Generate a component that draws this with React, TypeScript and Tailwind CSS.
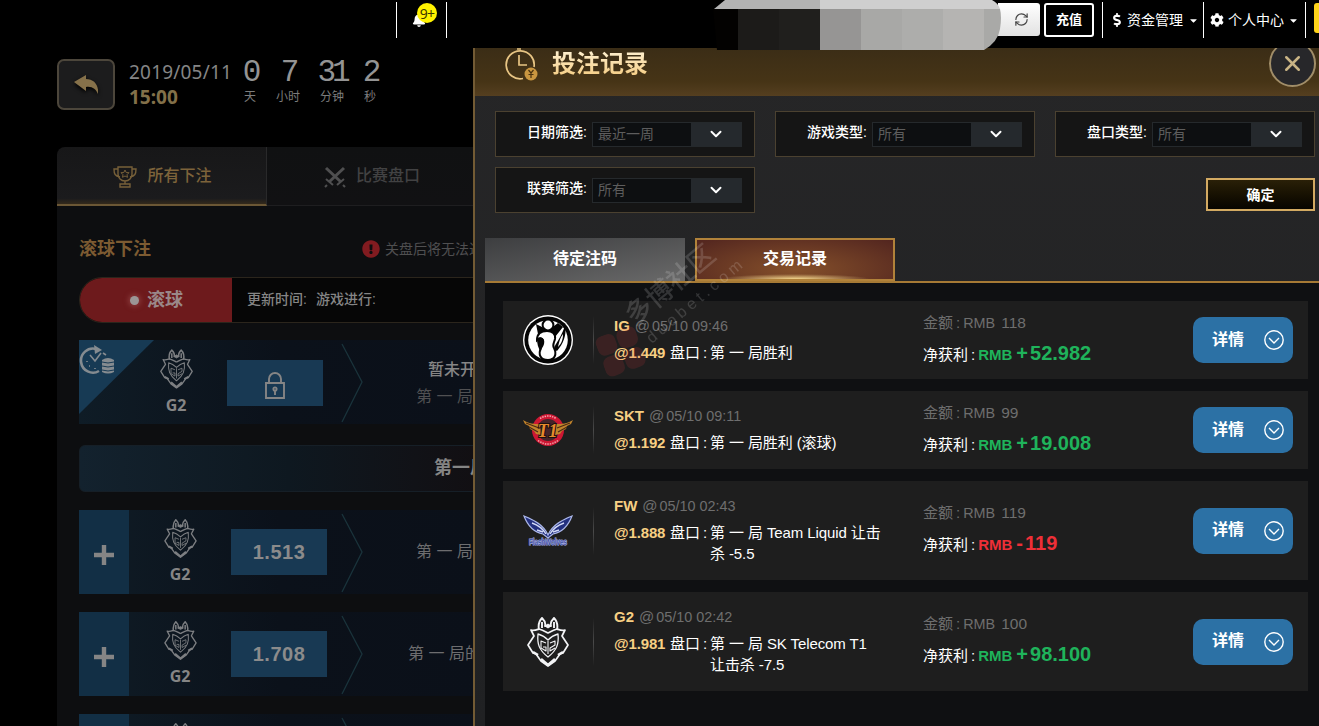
import React from 'react';
import { RefreshCw, X, ChevronDown } from 'lucide-react';
import { FaBell, FaCog, FaDollarSign, FaCaretDown, FaExclamationCircle } from 'react-icons/fa';

interface Bet {
    team: string;
    time: string;
    odds: string;
    lines: string[];
    amount: string;
    profit: string;
    logo: React.ReactNode;
}

const G2Logo: React.FC<{ className: string }> = ({ className }) => (
    <svg viewBox="0 0 42 50" className={className} fill="none" stroke="currentColor" strokeLinejoin="round">
        <path d="M12 13c-1-5 0-9 3-12 2 2 4 5 3 8h6c-1-3 1-6 3-8 3 3 4 7 3 12M15 5v6M27 5v6" strokeWidth="1.9" />
        <path d="M18 9l3-2 3 2-3 2z" fill="currentColor" strokeWidth="1" />
        <path d="M4 13c3 1 5 0 8-1 4 1 7 3 9 4 2-1 5-3 9-4 3 1 5 2 8 1l-3 6 6 9-5 8-3 1-5 7-7 5-7-5-5-7-3-1-5-8 6-9z" strokeWidth="1.7" />
        <path d="M14 42l7 6 7-6M6 35l5 3M36 35l-5 3" strokeWidth="2.6" />
        <path d="M11 17c4 1 7 3 10 6 3-3 6-5 10-6 1 10-1 16-10 23-9-7-11-13-10-23z" strokeWidth="1.3" />
        <path d="M19 26l-5-2v7l5 3v-4h-3M23 26l5-2v4l-5 3v3l5-3M21 24v13" strokeWidth="1.1" />
    </svg>
);

const IGLogo = () => (
    <svg viewBox="0 0 50 50" className="w-[50px] h-[50px]">
        <circle cx="25" cy="25" r="25" fill="#fff" />
        <circle cx="25" cy="25" r="23.6" fill="#050505" />
        <circle cx="25" cy="25" r="19.800" fill="#fff" />
        <path d="M13 9l10 5-1 3-7 2zM27 14l8-6 5 4-8 10-6-5z" fill="#050505" />
        <circle cx="25" cy="10" r="5.400" fill="#fff" stroke="#050505" strokeWidth="2" />
        <path d="M14 25c0-6 4-9 10-9 5 0 9 3 8 8-1 4-3 6-1 9 3 6 1 12-6 12-8 0-10-6-7-12 2-3 3-5 2-8-1-2-4-2-6 0z" fill="#fff" stroke="#050505" strokeWidth="2" />
        <path d="M14 23c5-2 8 1 6 6-1 3-2 5-2 8-3-4-4-8-4-14z" fill="#050505" />
        <path d="M42 11c2 9-2 18-8 25-3-1-3-4-1-7 3-5 6-10 9-18z" fill="#050505" />
        <path d="M40 19c0 6-2 10-5 13 1-5 2-9 5-13z" fill="#fff" />
    </svg>
);

const SKTLogo = () => (
    <svg viewBox="0 0 50 34" className="w-[50px] h-[34px]">
        <circle cx="25" cy="17" r="16" fill="#cd1733" />
        <circle cx="25" cy="17" r="11" fill="#45242a" />
        <path d="M0 7c6 4 11 4 17 4l1 11-5-1-2-3-4-2-1-3-4-2zM50 7c-6 4-11 4-17 4l-1 11 5-1 2-3 4-2 1-3 4-2z" fill="#c2842b" />
        <path d="M3 10l13 5M6 14l9 5M47 10l-13 5M44 14l-9 5" stroke="#4b2a14" strokeWidth="1.2" />
        <text x="24.500" y="23.500" textAnchor="middle" textLength="20" lengthAdjust="spacingAndGlyphs" fontSize="18" fontWeight="700" fontStyle="italic" fill="#e58a2c" stroke="#1c1010" strokeWidth="2" paintOrder="stroke" fontFamily="Liberation Serif, serif">T1</text>
        <path d="M17 5.500q8-5 16 0M15 27.500q10 7 20 0" stroke="#f3a6ae" strokeWidth="1.500" strokeDasharray="1.500 1" fill="none" />
    </svg>
);

const FWLogo = () => (
    <svg viewBox="0 0 50 32" className="w-[50px] h-[32px]">
        <path d="M1 1c10 4 20 9 24 19C29 10 39 5 49 1c-3 8-9 16-19 18l-5 4-5-4C10 17 4 9 1 1z" fill="#23307f" stroke="#aab6e8" strokeWidth="1.2" />
        <path d="M9 8c6 2 11 6 14 11M41 8c-6 2-11 6-14 11M14 15l6 2M36 15l-6 2" stroke="#d3daf7" strokeWidth="1.4" fill="none" />
        <text x="25" y="30" textAnchor="middle" textLength="38" lengthAdjust="spacingAndGlyphs" fontSize="9" fontWeight="700" fill="#4754a6" stroke="#a9b3e4" strokeWidth="1.2" paintOrder="stroke" fontFamily="Liberation Sans, sans-serif">FlashWolves</text>
    </svg>
);

const bets: Bet[] = [
    { team: 'IG', time: '05/10 09:46', odds: '1.449', lines: ['第 一 局胜利'], amount: '118', profit: '+52.982', logo: <IGLogo /> },
    { team: 'SKT', time: '05/10 09:11', odds: '1.192', lines: ['第 一 局胜利 (滚球)'], amount: '99', profit: '+19.008', logo: <SKTLogo /> },
    { team: 'FW', time: '05/10 02:43', odds: '1.888', lines: ['第 一 局 Team Liquid 让击', '杀 -5.5'], amount: '119', profit: '-119', logo: <FWLogo /> },
    { team: 'G2', time: '05/10 02:42', odds: '1.981', lines: ['第 一 局 SK Telecom T1', '让击杀 -7.5'], amount: '100', profit: '+98.100', logo: <G2Logo className="w-[42px] h-[50px] text-gray-100" /> }
];

const countdown = [
    { value: '0', unit: '天', width: 'w-[30px]' },
    { value: '7', unit: '小时', width: 'w-[46px]' },
    { value: '31', unit: '分钟', width: 'w-[42px]' },
    { value: '2', unit: '秒', width: 'w-[34px]' }
];

const Header = () => (
    <header className="relative z-20 flex shrink-0 h-[48px] bg-black text-white text-[14px]">
        <div className="relative flex shrink-0 items-center ml-[396px] mt-[2px] w-[51px] h-9 border-x border-white pl-4">
            <FaBell className="size-[14px] -ml-px" />
            <span className="absolute left-[20px] top-[1px] flex items-center justify-center size-5 rounded-full bg-[#fff200] text-[14px] tracking-tighter text-[#3c3800] font-['Noto_Sans',sans-serif]">9+</span>
        </div>
        <div className="flex shrink-0 items-center justify-center ml-[551px] mt-[3px] w-[42px] h-[33px] rounded-r-[3px] bg-linear-to-b from-white to-[#e2e2e2] text-[#444]">
            <RefreshCw className="size-[15px] ml-1" strokeWidth={1.9} />
        </div>
        <div className="flex shrink-0 items-center justify-center ml-1 mt-[3px] w-[50px] h-[34px] border-2 border-white rounded-[3px] text-[13px] font-bold">充值</div>
        <div className="flex shrink-0 items-center ml-2 mt-[2px] h-9 w-[101px] border-l border-white pl-[7px]">
            <FaDollarSign className="size-[14px]" />
            <span className="ml-[3px]">资金管理</span>
            <FaCaretDown className="size-[11px] ml-[5px]" />
        </div>
        <div className="flex shrink-0 items-center mt-[2px] h-9 w-[103px] border-x border-white pl-[6px]">
            <FaCog className="size-[14px]" />
            <span className="ml-1">个人中心</span>
            <FaCaretDown className="size-[11px] ml-1" />
        </div>
        <div className="shrink-0 ml-2 mt-[3px] w-[5px] h-[30px] rounded-l-[3px] bg-[#ffd31a]"></div>

        {/* masked balance */}
        <svg className="absolute left-[712px] top-0 w-[290px] h-[50px]" viewBox="0 0 290 50">
            <path d="M2 9L13 0h95v9z" fill="#b3b3b3" />
            <path d="M108 0h172q6 3 8 9H108z" fill="#cfcfcf" />
            <path d="M1 9h25v41H5z" fill="#030201" />
            <rect x="26" y="9" width="41" height="41" fill="#1c1b19" />
            <rect x="67" y="9" width="41" height="41" fill="#201f1d" />
            <rect x="108" y="9" width="41" height="41" fill="#969594" />
            <rect x="149" y="9" width="41" height="41" fill="#a8a8a6" />
            <rect x="190" y="9" width="41" height="41" fill="#adadab" />
            <rect x="231" y="9" width="41" height="41" fill="#b5b4b2" />
            <path d="M272 9h16q2 8 0 20-2 13-16 21z" fill="#a9a9a7" />
        </svg>
    </header>
);

const Chevron = () => (
    <svg viewBox="0 0 22 84" className="w-[22px] h-full shrink-0" fill="none">
        <path d="M1 4l20 38L1 82" stroke="#1a333b" strokeWidth="1.3" />
    </svg>
);

const OddsRow: React.FC<{ odds: string; label: string; indent: string }> = ({ odds, label, indent }) => (
    <div className="flex h-[84px] mb-[18px] w-[400px] bg-linear-to-r from-[#0f1c26] via-[#0b111a] to-[#0b1019]">
        <div className="flex items-center justify-center w-[50px] shrink-0 bg-[#122f45] pt-[6px]">
            <svg viewBox="0 0 20 20" className="size-5"><path d="M10 0v20M0 10h20" stroke="#858585" strokeWidth="4.4" /></svg>
        </div>
        <div className="flex flex-col items-center w-[102px] shrink-0 pt-[9px]">
            <G2Logo className="w-[33px] h-[39px] text-[#7d7f82]" />
            <span className="mt-[4px] text-[16px] font-bold leading-6 text-[#858585] font-['Noto_Sans',sans-serif]">G2</span>
        </div>
        <div className="flex items-center justify-center w-24 h-[46px] mt-[19px] shrink-0 bg-[#183953] text-[20px] font-bold text-[#8b8b8b] tracking-[0.5px]">{odds}</div>
        <div className="ml-[14px] shrink-0"><Chevron /></div>
        <span className={`${indent} leading-[84px] text-[16px] text-[#6d6d6f] whitespace-nowrap`}>{label}</span>
    </div>
);

const MatchPanel = () => (
    <div className="w-[473px] shrink-0 h-full overflow-hidden pl-[57px] bg-black">
        <div className="flex h-[99px] pt-[11px]">
            <div className="flex items-center justify-center w-[58px] h-[51px] border-2 border-[#4c463b] rounded-[7px] bg-[#1c1c1d]">
                <svg viewBox="0 0 24 20" className="w-6 h-5 drop-shadow-[0_2px_2px_#000]">
                    <path d="M0 7L12 0v4c8 0 13 6 12 15-2-5-6-8-12-7v4z" fill="#86714a" />
                </svg>
            </div>
            <div className="ml-[14px] w-[106px] pt-px font-['Noto_Sans',sans-serif] text-[19px] leading-[25px]">
                <p className="text-[#858585] tracking-[0.2px]">2019/05/11</p>
                <p className="text-[#827049] font-bold">15:00</p>
            </div>
            <div className="flex pt-[2px]">
                {countdown.map(c => (
                    <div key={c.unit} className={`${c.width} flex flex-col items-center`}>
                        <span className="h-[26px] leading-[23px] text-[31px] tracking-[-4px] pr-[-4px] text-[#949494] font-['Liberation_Mono',monospace]">{c.value}</span>
                        <span className="text-[12px] leading-[20px] text-[#7c7c7c]">{c.unit}</span>
                    </div>
                ))}
            </div>
        </div>

        <div className="flex h-[59px]">
            <div className="flex items-center justify-center w-[210px] shrink-0 rounded-tl-lg border-r border-r-[#29292a] border-b-2 border-b-[#6b5735] bg-linear-to-b from-[#171718] via-[#1b1b1d] via-90% to-[#33291b]">
                <svg viewBox="0 0 24 22" className="w-6 h-[22px] ml-[2px] mt-[2px]" fill="none" stroke="#776039" strokeWidth="1.4">
                    <path d="M5 1h14v7c0 4-3 7-7 7s-7-3-7-7zM5 3H1c0 5 1 7 6 8M19 3h4c0 5-1 7-6 8M12 15v3M8 18h8M7 21h10v-3H7z" />
                    <path d="M12 4l1.2 2.5 2.8.2-2 2 .5 2.6L12 10l-2.500 1.300.5-2.600-2-2 2.800-.2z" strokeWidth="1" />
                </svg>
                <span className="ml-[10px] text-[16px] font-medium text-[#7d633a]">所有下注</span>
            </div>
            <div className="flex items-center justify-center w-[210px] shrink-0 border-b border-b-[#1e1e20] bg-linear-to-b from-[#101112] to-[#111113] text-[#424243]">
                <svg viewBox="0 0 22 22" className="size-[22px] mt-[2px]" fill="none" stroke="#4f4f50">
                    <path d="M2 2l15 14M20 2L5 16" strokeWidth="3" />
                    <path d="M2 13l7 6M20 13l-7 6M3 19l-2 2M19 19l2 2" strokeWidth="2" />
                </svg>
                <span className="ml-[10px] text-[16px] font-medium">比赛盘口</span>
            </div>
        </div>

        <div className="h-[520px] bg-[#0d0e10] pl-[22px] pt-[27px] overflow-hidden">
            <div className="flex items-center h-[32px] w-[600px]">
                <h2 className="w-[283px] shrink-0 text-[18px] font-bold text-[#7d5b32]">滚球下注</h2>
                <FaExclamationCircle className="size-[18px] text-[#811b20] shrink-0" />
                <span className="ml-[5px] text-[14px] text-[#4f4f50] whitespace-nowrap">关盘后将无法进行下注</span>
            </div>

            <div className="flex mt-3 h-[46px] w-[420px] rounded-l-full overflow-hidden border border-[#2b251c] bg-[#060606]">
                <div className="flex items-center w-[152px] bg-[#6d1a1c] pl-[50px]">
                    <span className="size-[9px] rounded-full bg-[#9b9696] shadow-[0_0_5px_2px_#88383a]"></span>
                    <span className="ml-2 text-[18px] font-bold text-[#9a8889]">滚球</span>
                </div>
                <span className="ml-[15px] leading-[43px] text-[14px] font-medium text-[#858585]">更新时间:</span>
                <span className="ml-[9px] leading-[43px] text-[14px] font-medium text-[#858585]">游戏进行:</span>
            </div>

            <div className="flex mt-[17px] h-[84px] w-[400px] bg-linear-to-r from-[#0f1c26] via-[#0b111a] to-[#0b1019]">
                <svg viewBox="0 0 75 75" className="size-[75px] shrink-0">
                    <path d="M0 0h75L0 74z" fill="#173a54" />
                    <path d="M20 31a12 12 0 1 1-3-22" fill="none" stroke="#858b90" strokeWidth="2.6" />
                    <path d="M15 5l8 5-7 4z" fill="#858b90" />
                    <path d="M11 15l5 6 6-8M8 21v1M10 26h1M16 28v1M24 13l3 2" fill="none" stroke="#858b90" strokeWidth="1.6" />
                    <path d="M23 20q6-4 12 0v12q-6 3-12 0z" fill="#858b90" />
                    <path d="M23 22q6 2 12 0M23 26q6 2 12 0M23 30q6 2 12 0" fill="none" stroke="#173a54" strokeWidth="1" />
                </svg>
                <div className="flex flex-col items-center w-[44px] shrink-0 pt-[9px]">
                    <G2Logo className="w-[33px] h-[40px] text-[#7d7f82]" />
                    <span className="mt-[4px] text-[16px] font-bold leading-6 text-[#858585] font-['Noto_Sans',sans-serif]">G2</span>
                </div>
                <div className="flex items-center justify-center ml-[29px] mt-[20px] w-24 h-[46px] shrink-0 bg-[#183953]">
                    <svg viewBox="0 0 20 27" className="w-5 h-[27px] mt-1" fill="none" stroke="#858585" strokeWidth="1.9">
                        <path d="M1 11h18v15H1zM4 11V7a6 6 0 0 1 12 0v4" />
                        <circle cx="10" cy="17" r="1.6" />
                        <path d="M10 18v5" />
                    </svg>
                </div>
                <div className="ml-[18px] shrink-0"><Chevron /></div>
                <div className="ml-[53px] pt-[16px] whitespace-nowrap leading-[27px]">
                    <p className="pl-[12px] text-[16px] font-medium text-[#858585]">暂未开盘</p>
                    <p className="text-[16px] text-[#505052]">第 一 局胜利</p>
                </div>
            </div>

            <div className="mt-[21px] mb-[18px] h-[47px] w-[420px] rounded-md border border-[#161f27] bg-linear-to-r from-[#13222e] via-[#0e1820] via-50% to-[#120e11] pl-[354px] text-[18px] leading-[44px] font-bold text-[#858585] whitespace-nowrap">第一局</div>
            <OddsRow odds="1.513" label="第 一 局胜利" indent="ml-[53px]" />
            <OddsRow odds="1.708" label="第 一 局的首杀" indent="ml-[45px]" />
            <OddsRow odds="1.650" label="第 一 局首塔" indent="ml-[53px]" />
        </div>
    </div>
);

const FilterBox: React.FC<{ label: string; value: string }> = ({ label, value }) => (
    <div className="flex items-center w-[260px] h-[46px] border border-[#4b4130] bg-[#151515]">
        <span className="w-[91px] text-right text-[14px] font-medium text-white pb-[3px]">{label}:</span>
        <div className="flex ml-[5px] w-[150px] h-[25px] border border-[#25292c]">
            <span className="w-[98px] pl-[5px] text-[14px] leading-[23px] bg-[#0d0f11] text-[#5d5d5d]">{value}</span>
            <span className="flex items-center justify-center flex-1 bg-[#25292d] text-white pr-px">
                <ChevronDown className="size-[18px]" strokeWidth={2.6} />
            </span>
        </div>
    </div>
);

const BetCard: React.FC<{ bet: Bet }> = ({ bet }) => {
    const won = bet.profit.startsWith('+');
    return (
        <div className={`flex items-center w-[805px] mb-3 bg-[#1e1e1e] text-[15px] ${bet.lines.length > 1 ? 'h-[99px]' : 'h-[78px]'}`}>
            <div className="flex items-center justify-center w-[90px]">{bet.logo}</div>
            <div className="w-px h-12 bg-linear-to-b from-transparent via-[#4a4a4a] to-transparent"></div>
            <div className="self-start w-[329px] pl-5 pt-[13px]">
                <p className="leading-6 text-[#6e6e6e]">
                    <span className="font-bold text-[#f7cf83]">{bet.team}</span>
                    <span className="ml-[5px]">@</span>
                    <span className="ml-[2px] text-[14.4px]">{bet.time}</span>
                </p>
                <div className="flex mt-[4px] leading-[21px] text-white whitespace-nowrap">
                    <span className="w-[56px] font-bold text-[#f7cf83] tracking-[-0.15px]">@{bet.odds}</span>
                    <span className="w-[40px]">盘口<span className="ml-[3px]">:</span></span>
                    <div className="tracking-[-0.1px]">
                        {bet.lines.map(line => <p key={line}>{line}</p>)}
                    </div>
                </div>
            </div>
            <div className="w-[270px] pb-[4px] whitespace-nowrap">
                <p className="leading-[28px] h-[29px] text-[#6e6e6e]">
                    金额<span className="mx-[3px]">:</span><span className="text-[14.4px]">RMB</span>
                    <span className="ml-[6px] text-[15.5px]">{bet.amount}</span>
                </p>
                <p className="leading-[30px] h-[30px] text-white">
                    净获利<span className="mx-[3px]">:</span>
                    <span className={`font-bold ${won ? 'text-[#1fb35b]' : 'text-[#ee2f37]'}`}>
                        RMB<span className="ml-1 text-[20px]">{bet.profit[0]}</span><span className="ml-[2px] text-[20px]">{bet.profit.slice(1)}</span>
                    </span>
                </p>
            </div>
            <button className="flex items-center w-[100px] h-[46px] rounded-[10px] bg-[#2c71a5] pl-5 text-[16px] font-bold text-white">
                <span className="-mt-px -ml-px">详情</span>
                <svg viewBox="0 0 20 20" className="size-5 ml-5" fill="none" stroke="#fff" strokeWidth="1.4">
                    <circle cx="10" cy="10" r="9.2" />
                    <path d="M5 8l5 5 5-5" />
                </svg>
            </button>
        </div>
    );
};

const RecordPanel = () => (
    <div className="relative flex flex-col w-[846px] shrink-0 h-full border-l-2 border-[#735b34] bg-linear-to-b from-[#262627] to-[#202123]">
        <div className="relative flex items-center h-[48px] shrink-0 bg-linear-to-b from-[#3b2d16] via-[#463416] via-70% to-[#553f20]">
            <svg viewBox="0 0 34 34" className="w-[34px] h-[34px] ml-[29px] mb-[16px]" fill="none" stroke="#e8c584" strokeWidth="1.7">
                <path d="M19 31.500A14 14 0 1 1 30 20M15 8v10h8M13 2h4" />
                <circle cx="27" cy="27" r="6.500" fill="#c99640" stroke="none" />
                <path d="M24.500 23l2.500 3 2.500-3M27 26v5M24.500 27.500h5" stroke="#48310f" strokeWidth="1.2" />
            </svg>
            <h1 className="ml-[14px] mb-[16px] text-[24px] leading-8 font-bold text-transparent bg-clip-text bg-linear-to-b from-[#fff3d6] to-[#f3c878]">投注记录</h1>
            <button className="absolute left-[794px] -top-[8px] flex items-center justify-center size-[47px] rounded-full border-2 border-[#a08d68] bg-[#27272a]">
                <X className="size-[25px] text-[#c9b485]" strokeWidth={2.4} />
            </button>
        </div>

        <div className="relative h-[142px] shrink-0 pl-5 pt-[15px]">
            <div className="grid grid-cols-[260px_260px_260px] gap-x-5 gap-y-[10px]">
                <FilterBox label="日期筛选" value="最近一周" />
                <FilterBox label="游戏类型" value="所有" />
                <FilterBox label="盘口类型" value="所有" />
                <FilterBox label="联赛筛选" value="所有" />
                <button className="col-start-3 justify-self-end mt-[11px] w-[109px] h-[33px] border-2 border-[#d3aa62] bg-linear-to-b from-[#2a2008] to-[#070500] text-[14px] leading-[28px] font-bold text-white">确定</button>
            </div>
        </div>

        <div className="flex ml-[10px] h-[45px] shrink-0 border-b-2 border-[#a67a35]">
            <div className="w-[200px] h-full bg-linear-to-br from-[#3d3e40] to-[#6a6a6a] text-center text-[16px] leading-[41px] font-bold text-white">待定注码</div>
            <div className="ml-[10px] w-[200px] h-[43px] border-2 border-[#b1823a] bg-[radial-gradient(ellipse_75px_5px_at_50%_100%,#f4d68d,transparent),radial-gradient(ellipse_at_50%_75%,#85502a,#52251f)] text-center text-[16px] leading-[38px] font-bold text-white">交易记录</div>
        </div>
        <div className="ml-[10px] flex-1 bg-[#0f1012] pl-[18px] pt-[18px]">
            {bets.map(bet => <BetCard key={bet.team} bet={bet} />)}
        </div>

        {/* watermark */}
        <div className="absolute left-[110px] top-[214px] w-[180px] h-[70px] -rotate-[40deg] flex items-center opacity-15 pointer-events-none">
            <svg viewBox="0 0 44 44" className="size-[44px] shrink-0 -ml-2 mt-4 rotate-[20deg]" fill="#d8383e">
                <rect x="0" y="0" width="20" height="20" rx="7" />
                <rect x="22" y="0" width="20" height="20" rx="7" />
                <rect x="0" y="22" width="20" height="20" rx="7" />
                <rect x="22" y="22" width="20" height="20" rx="7" />
            </svg>
            <div className="ml-1 text-white whitespace-nowrap">
                <p className="text-[27px] leading-7 font-medium">多博社区</p>
                <p className="pl-[2px] pt-1 text-[16px] leading-5 tracking-[4px]">duobet.com</p>
            </div>
        </div>
    </div>
);

const App: React.FC = () => {
    return (
        <div className="flex flex-col w-[1319px] h-[726px] overflow-hidden bg-black font-['Liberation_Sans','Noto_Sans_CJK_SC',sans-serif]">
            <Header />
            <div className="flex flex-1 min-h-0">
                <MatchPanel />
                <RecordPanel />
            </div>
        </div>
    );
};

export default App;
